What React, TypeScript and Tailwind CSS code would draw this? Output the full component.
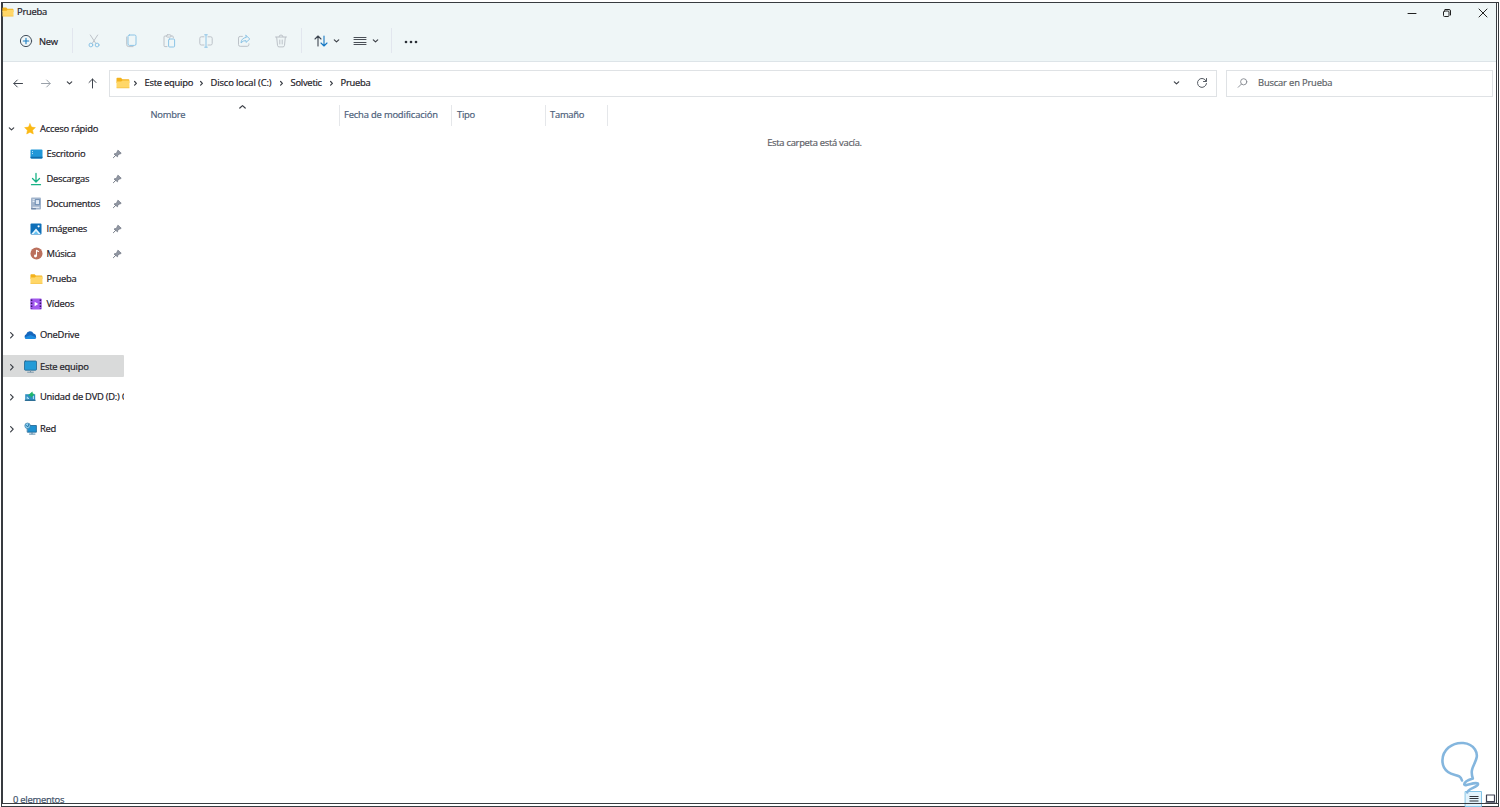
import type { ReactNode } from "react";

type IconProps = { children: ReactNode; w?: number; h?: number; box?: string; className?: string };

function Icon({ children, w = 14, h = 14, box = "0 0 14 14", className = "" }: IconProps) {
  return (
    <svg
      width={w}
      height={h}
      viewBox={box}
      fill="none"
      strokeLinecap="round"
      strokeLinejoin="round"
      className={`block shrink-0 ${className}`}
    >
      {children}
    </svg>
  );
}

const Chevron = ({ d, color = "#3b3f46" }: { d: "down" | "right" | "up" | "crumb"; color?: string }) => (
  <Icon w={8} h={8} box="0 0 8 8">
    <path
      d={
        d === "down"
          ? "M1.3 2.9 3.5 4.9 5.7 2.9"
          : d === "right"
            ? "M2.6 1.6 5.2 4.2 2.6 6.8"
            : d === "crumb"
              ? "M2.6 2.5 4.4 4.3 2.6 6.1"
              : "M.8 5 3.5 2.6 6.2 5"
      }
      stroke={color}
      strokeWidth="1.2"
    />
  </Icon>
);

const Folder = ({ w = 14, h = 12 }: { w?: number; h?: number }) => (
  <Icon w={w} h={h} box="0 0 14 12">
    <path d="M.5 1.6Q.5.8 1.3.8H5L6.3 2.2h6.2q.8 0 .8.8v3H.5Z" fill="#f3b21c" />
    <path d="M.5 4.4h4.7l1.2-1h6.2q.8 0 .8.8v6q0 .9-.9.9H1.4q-.9 0-.9-.9Z" fill="#ffd768" />
    <path d="M1 10.8h12" stroke="#f6c244" strokeWidth=".8" />
  </Icon>
);

const Pin = () => (
  <Icon w={10} h={10} box="0 0 10 10">
    <path d="M6.2 1.4 9.2 4.2 8.2 4.9 7.2 5 5.8 6.4 5.5 7.8 2 5 3.7 4.6 5.1 3.2 5.4 2.2Z" fill="#9298a3" stroke="#737a86" strokeWidth=".8" />
    <path d="M3.6 6.5 1.4 8.7" stroke="#737a86" />
  </Icon>
);

const Star = () => (
  <Icon w={12} h={12} box="0 0 12 12">
    <path d="m6 .7 1.6 3.4 3.8.5-2.8 2.6.7 3.8L6 9.2 2.7 11l.7-3.8L.6 4.6l3.8-.5Z" fill="#fbb914" stroke="#fbb914" strokeWidth=".5" />
  </Icon>
);
const Desktop = () => (
  <Icon w={13} h={12} box="0 0 13 12">
    <rect x=".5" y="1.5" width="12" height="9" rx="1" fill="#2097d8" />
    <path d="M.5 8.8h12v.7q0 1-1 1h-10q-1 0-1-1Z" fill="#0f6cab" />
    <path d="M2.2 3.6h.8M2.2 5.6h.8" stroke="#e4f7ff" strokeLinecap="butt" />
  </Icon>
);
const Download = () => (
  <Icon w={12} h={14} box="0 0 12 14">
    <path d="M6 1.5v8M2.5 6.5 6 10l3.5-3.5M1.5 12.7h9" stroke="#18b285" strokeWidth="1.3" />
  </Icon>
);
const Documents = () => (
  <Icon w={12} h={13} box="0 0 12 13">
    <rect x="1" y=".5" width="10" height="12" rx="1" fill="#a3b5cc" />
    <path d="M3 2.8h2M3 4.6h1.5M3 10.3h6" stroke="#eef4fb" />
    <rect x="5.6" y="2.6" width="4" height="5" fill="#dfe9f5" stroke="#5b7fa8" strokeWidth=".8" />
    <path d="M1.5 11.8h4" stroke="#5d7697" />
  </Icon>
);
const Pictures = () => (
  <Icon w={12} h={12} box="0 0 12 12">
    <rect x=".5" y=".5" width="11" height="11" rx="1" fill="#0f70b9" />
    <path d="M1.3 11 6 5.4l4.7 5.6Z" fill="#e7f6ff" />
    <path d="m3.5 11 2.5-3 2.5 3Z" fill="#65c3f2" />
    <circle cx="8.6" cy="3.3" r="1.1" fill="#fff" />
  </Icon>
);
const Music = () => (
  <Icon w={13} h={13} box="0 0 13 13">
    <circle cx="6.5" cy="6.5" r="6" fill="#bb705d" />
    <path d="M6.5 9V3.2l2 1.3" stroke="#fff" strokeWidth="1.1" />
    <circle cx="5.4" cy="9" r="1.4" fill="#fff" />
  </Icon>
);
const Video = () => (
  <Icon w={12} h={12} box="0 0 12 12">
    <rect x=".3" y=".5" width="11.4" height="11" rx="1" fill="#a259ee" />
    <path d="M1.6 1.5v9.5M10.4 1.5v9.5" stroke="#351468" strokeWidth="1.5" strokeDasharray="1.5 1.5" strokeLinecap="butt" />
    <path d="m4.6 3.8 3.6 2.2-3.6 2.2Z" fill="#fff" />
  </Icon>
);
const Cloud = () => (
  <Icon w={13} h={10} box="0 0 13 10">
    <path d="M2.6 9A2.5 2.5 0 0 1 2.2 4.2 3.9 3.9 0 0 1 9.5 3.4 2.9 2.9 0 0 1 10.2 9Z" fill="#1667bd" />
    <path d="M.6 7.5 6.5 5l5.9 2.5Q11.7 9 10.2 9H2.6Q1.2 9 .6 7.5Z" fill="#1c8ce0" />
  </Icon>
);
const Monitor = () => (
  <Icon w={13} h={13} box="0 0 13 13">
    <rect x=".5" y="1" width="12" height="9.2" rx=".8" fill="#249bd7" stroke="#21658f" strokeWidth=".8" />
    <path d="M6.5 10.5v1.3M3.6 12.2h5.8" stroke="#7794a8" />
  </Icon>
);
const Dvd = () => (
  <Icon w={13} h={12} box="0 0 13 12">
    <path d="M1.2 3.2h10v6.5h-10Z" fill="#2f8fc0" />
    <path d="M1.2 9.3h10" stroke="#1f5f87" />
    <path d="M3.2 7.8V5.8l1.5 2M9.4 5.2v2.5" stroke="#b8e5fa" />
    <path d="M4 4.3 8.4.6l.4 2 1.7.4L7.2 6.8 6.4 4.8Z" fill="#1fb56c" />
  </Icon>
);
const Network = () => (
  <Icon w={13} h={13} box="0 0 13 13">
    <path d="M3.6 3.5h8.8v6.7H3.6Z" fill="#1e91d1" stroke="#1c618e" strokeWidth=".8" />
    <path d="M8 10.4v1.4M5.5 12.1H11" stroke="#5286a8" />
    <circle cx="3.6" cy="3.8" r="2.8" fill="#8fd0f0" stroke="#266f9e" strokeWidth=".6" />
    <path d="M1.8 3.2 4 4.8 4.8 2.2" stroke="#1f6ea3" strokeWidth=".9" />
  </Icon>
);

const gray = "#bcc2c8";
const blue = "#8cc4e6";

const actions: ReactNode[] = [
  <Icon key="cut">
    <path d="M3.3 1 8.8 9.4M10.7 1 5.2 9.4" stroke={gray} />
    <circle cx="3.9" cy="11" r="1.9" stroke={blue} />
    <circle cx="10.1" cy="11" r="1.9" stroke={blue} />
  </Icon>,
  <Icon key="copy">
    <path d="M2.7 3v7.6q0 2 2 2h4.4" stroke={gray} />
    <rect x="4" y="1" width="8" height="10.4" rx="1.4" stroke={blue} />
  </Icon>,
  <Icon key="paste">
    <path d="M5 12.6H3q-1 0-1-1V3q0-1 1-1h1.5M9 2h1.3q1 0 1 1v.8" stroke={gray} />
    <rect x="4.5" y=".8" width="4.5" height="2.3" rx="1" stroke={gray} />
    <rect x="6.6" y="5" width="6" height="8" rx="1" stroke={blue} />
  </Icon>,
  <Icon key="rename">
    <path d="M5 2.8H2.3Q.8 2.8.8 4.3v5.2q0 1.5 1.5 1.5H5M9 2.8h2.7q1.5 0 1.5 1.5v5.2q0 1.5-1.5 1.5H9" stroke={gray} />
    <path d="M7 1v12M5.7.8h2.6M5.7 13.2h2.6" stroke={blue} />
  </Icon>,
  <Icon key="share">
    <path d="M5.4 2.4H3.2q-1.7 0-1.7 1.7v6.5q0 1.7 1.7 1.7h7q1.7 0 1.7-1.7V9.8" stroke={gray} />
    <path d="M9 1.4 12.8 5 9 8.4V6.6Q5.8 6.4 4 9q.2-4.8 5-5.6Z" stroke={blue} />
  </Icon>,
  <Icon key="delete">
    <path d="M1.5 3h11M5 2.8Q5 1 7 1t2 1.8M2.7 3.3l.8 8.1q.2 1.5 1.5 1.5h4q1.3 0 1.5-1.5l.8-8.1M5.8 6v4M8.2 6v4" stroke={gray} />
  </Icon>,
];

const quick: { icon: ReactNode; label: string; pinned: boolean }[] = [
  { icon: <Desktop />, label: "Escritorio", pinned: true },
  { icon: <Download />, label: "Descargas", pinned: true },
  { icon: <Documents />, label: "Documentos", pinned: true },
  { icon: <Pictures />, label: "Imágenes", pinned: true },
  { icon: <Music />, label: "Música", pinned: true },
  { icon: <Folder w={13} h={12} />, label: "Prueba", pinned: false },
  { icon: <Video />, label: "Vídeos", pinned: false },
];

const roots: { icon: ReactNode; label: string; selected?: boolean }[] = [
  { icon: <Cloud />, label: "OneDrive" },
  { icon: <Monitor />, label: "Este equipo", selected: true },
  { icon: <Dvd />, label: "Unidad de DVD (D:) C" },
  { icon: <Network />, label: "Red" },
];

const crumbs = [
  { label: "Este equipo", cls: "w-[66px]" },
  { label: "Disco local (C:)", cls: "w-[80px] tracking-[-0.1px]" },
  { label: "Solvetic", cls: "w-[50px]" },
];

function Separator() {
  return <div className="h-[25px] w-px shrink-0 bg-[#e2e6ee]" />;
}

function TitleBar() {
  return (
    <div className="flex h-[17px] justify-between">
      <div className="-ml-px flex items-center gap-[3px]">
        <Folder w={12} h={12} />
        <span>Prueba</span>
      </div>
      <div className="flex h-5 items-center pr-[8px]">
        <Icon w={10} h={10} box="0 0 10 10" className="mr-[25px]">
          <path d="M1 5.5h8" stroke="#222" />
        </Icon>
        <Icon w={10} h={10} box="0 0 10 10" className="mr-[26px]">
          <rect x="1.5" y="3" width="5.5" height="5.5" rx="1" stroke="#222" />
          <path d="M3 1.5h4q1.5 0 1.5 1.5v4" stroke="#222" />
        </Icon>
        <Icon w={10} h={10} box="0 0 10 10">
          <path d="m1 1 8 8M9 1 1 9" stroke="#222" />
        </Icon>
      </div>
    </div>
  );
}

function Toolbar() {
  return (
    <div className="flex h-[41px] items-center">
      <div className="flex w-[69px] items-center gap-[6px] pl-[16px]">
        <Icon w={14} h={14}>
          <circle cx="7" cy="7" r="5.6" stroke="#45505c" />
          <path d="M7 4.3v5.4M4.3 7h5.4" stroke="#1c7fc4" strokeWidth="1.1" />
        </Icon>
        <span className="pt-[2px]">New</span>
      </div>
      <Separator />
      <div className="flex w-[228px] pl-[2px]">
        {actions.map((a, i) => (
          <div key={i} className="flex w-[37.5px] shrink-0 justify-center">
            {a}
          </div>
        ))}
      </div>
      <Separator />
      <div className="flex w-[89px] items-center pl-[12px]">
        <Icon w={14} h={14}>
          <path d="M4 12V2.2M1 5l3-3 3 3" stroke="#3e4651" strokeWidth="1.1" />
          <path d="M10 2v9.8M7 9l3 3 3-3" stroke="#1678c4" strokeWidth="1.1" />
        </Icon>
        <div className="ml-[5px]"><Chevron d="down" /></div>
        <Icon w={14} h={12} box="0 0 14 12" className="ml-[12px]">
          <path d="M1 2.5h12M1 4.5h12M1 7.5h12M1 9.5h12" stroke="#4a4f57" />
        </Icon>
        <div className="ml-[5px]"><Chevron d="down" /></div>
      </div>
      <Separator />
      <Icon w={14} h={6} box="0 0 14 6" className="ml-[12px] mt-[2px]">
        <circle cx="2" cy="3" r="1.3" fill="#2b2f36" />
        <circle cx="7" cy="3" r="1.3" fill="#2b2f36" />
        <circle cx="12" cy="3" r="1.3" fill="#2b2f36" />
      </Icon>
    </div>
  );
}

function AddressRow() {
  return (
    <div className="flex h-[42px] items-center pr-[3px]">
      <div className="flex w-[106px] items-center pl-[9px]">
        <Icon w={12} h={12} box="0 0 12 12">
          <path d="M10.5 6.5H2M5.3 3 1.8 6.5l3.5 3.5" stroke="#3e444d" />
        </Icon>
        <Icon w={12} h={12} box="0 0 12 12" className="ml-[16px]">
          <path d="M1.5 6.5h8.5M6.7 3l3.5 3.5L6.7 10" stroke="#9aa1a9" />
        </Icon>
        <div className="ml-[14px]"><Chevron d="down" /></div>
        <Icon w={12} h={12} box="0 0 12 12" className="ml-[12px]">
          <path d="M6.5 11V2M3 5.5 6.5 2 10 5.5" stroke="#3e444d" />
        </Icon>
      </div>
      <div className="flex h-[27px] w-[1108px] items-center border border-[#dfe2e5] pl-[6px] pr-[8px]">
        <Folder w={14} h={12} />
        <div className="ml-[2px] mr-[3px]"><Chevron d="crumb" /></div>
        <div className="flex items-center pl-[1.5px]">
          {crumbs.map((c) => (
            <div key={c.label} className={`flex shrink-0 items-center justify-between pr-[5px] ${c.cls}`}>
              <span className="whitespace-nowrap">{c.label}</span>
              <Chevron d="crumb" />
            </div>
          ))}
          <span>Prueba</span>
        </div>
        <div className="ml-auto mr-[15px]"><Chevron d="down" /></div>
        <Icon w={12} h={12} box="0 0 12 12">
          <path d="M10.2 4.2A4.5 4.5 0 1 0 10.5 6.5M10.5 1.5v3h-3" stroke="#555b63" />
        </Icon>
      </div>
      <div className="ml-[9px] flex h-[27px] flex-1 items-center border border-[#dfe2e5] pl-[10px] text-[#5b5f66]">
        <Icon w={12} h={12} box="0 0 12 12">
          <circle cx="6.7" cy="4.8" r="3.1" stroke="#83888e" strokeWidth=".9" />
          <path d="M4.4 7.1 1.2 10.3" stroke="#83888e" strokeWidth=".9" />
        </Icon>
        <span className="ml-[9px] tracking-[-0.17px]">Buscar en Prueba</span>
      </div>
    </div>
  );
}

function Sidebar() {
  return (
    <nav className="w-[121px] shrink-0 pt-[12px]">
      <div className="flex h-[25px] items-center pl-[5px]">
        <Chevron d="down" />
        <div className="ml-[8px] mr-[4px]"><Star /></div>
        <span>Acceso rápido</span>
      </div>
      {quick.map((q) => (
        <div key={q.label} className="flex h-[25px] items-center pl-[26px] pr-[2px]">
          <div className="flex w-[17.5px] shrink-0 justify-start">
            <div className="flex w-[14px] justify-center">{q.icon}</div>
          </div>
          <span>{q.label}</span>
          {q.pinned && <div className="ml-auto"><Pin /></div>}
        </div>
      ))}
      <div className="pt-[3px]">
        {roots.map((r) => (
          <div key={r.label} className="flex h-[31.35px] items-center">
            <div className={`flex h-[22px] w-full items-center overflow-hidden pl-[5px] ${r.selected ? "rounded-r-[1px] bg-[#d9dada] pt-px" : ""}`}>
              <Chevron d="right" />
              <div className="ml-[8px] mr-[3px]">{r.icon}</div>
              <span className="whitespace-nowrap">{r.label}</span>
            </div>
          </div>
        ))}
      </div>
    </nav>
  );
}

function FileList() {
  return (
    <main className="flex-1">
      <div className="flex h-[22px] items-center text-[#4c607a]">
        <div className="flex h-[21px] w-[216px] items-center border-r border-[#e5e7ea] pl-[26.5px]">
          <span className="w-[88px]">Nombre</span>
          <div className="-mt-[16px]"><Chevron d="up" /></div>
        </div>
        <div className="flex h-[21px] w-[112px] items-center whitespace-nowrap border-r border-[#e5e7ea] pl-[4px] tracking-[-0.17px]">Fecha de modificación</div>
        <div className="flex h-[21px] w-[94px] items-center border-r border-[#e5e7ea] pl-[5px]">Tipo</div>
        <div className="flex h-[21px] w-[62px] items-center border-r border-[#e5e7ea] pl-[4px]">Tamaño</div>
      </div>
      <p className="pl-[9px] pt-[10px] text-center tracking-[-0.28px] text-[#5d6066]">Esta carpeta está vacía.</p>
    </main>
  );
}

export default function App() {
  return (
    <div className="relative h-[807px] w-[1500px] overflow-hidden bg-white pl-px pt-[2px] font-['Open_Sans','Noto_Sans',sans-serif] text-[9.4px] leading-[14px] tracking-[-0.24px] text-[#1d2027] [-webkit-text-stroke:0.2px_currentColor]">
      <div className="h-[805px] w-[1498px] border border-[#383b40]">
        <div className="flex h-[801px] w-[1495px] flex-col border-b border-l border-r border-[#383b40]">
          <header className="h-[59px] shrink-0 border-b border-[#dde4e8] bg-[#eff6f7]">
            <TitleBar />
            <Toolbar />
          </header>
          <AddressRow />
          <div className="flex flex-1">
            <Sidebar />
            <FileList />
          </div>
          <footer className="-mb-[4px] flex h-[14px] shrink-0 items-center pl-[10px] text-[#3d5068]">
            <span>0 elementos</span>
          </footer>
        </div>
      </div>
      <div className="absolute left-[1464px] top-[791px]">
        <Icon w={34} h={16} box="0 0 34 16">
          <rect x="1.5" y=".5" width="16" height="15" fill="#e2f3fc" stroke="#82c3e6" />
          <path d="M5.5 5.5h9M5.5 7.5h9M5.5 10h9" stroke="#30343b" strokeLinecap="butt" />
          <rect x="22.5" y="4" width="8" height="6.5" fill="#fff" stroke="#3c3f50" strokeWidth="1.2" />
          <path d="M22 11.5h9" stroke="#6a6d7c" />
          <path d="M0 12.5h34" stroke="#383b40" />
        </Icon>
      </div>
      <div className="absolute left-[1440px] top-[741px]">
        <Icon w={42} h={56} box="0 0 42 56">
          <path
            d="M22 39.5C20 32.5 14 35.5 8 31 .5 25.5.5 13.500 8.5 6.5 17.5-.5 30 1 35 8.5c5 8-1.5 13.5-3 20.5-.8 3.500 0 6 .8 8.5-4.5 1.500-9 3.500-8.5 6 .5 2.500 10-3 13.5-1 2 3-11 5.5-10.5 9"
            stroke="#84b6de"
            strokeWidth="2.6"
          />
        </Icon>
      </div>
    </div>
  );
}
